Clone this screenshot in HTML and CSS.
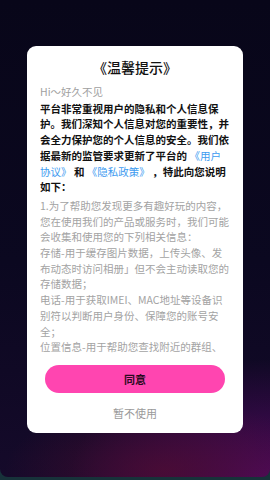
FILE: index.html
```html
<!DOCTYPE html>
<html lang="zh-CN">
<head>
    <meta charset="UTF-8">
    <meta name="viewport" content="width=device-width, initial-scale=1.0">
    <title>温馨提示</title>
    <link rel="stylesheet" href="styles.css">
</head>
<body>

<div class="screen">
    <div class="dialog">
        <h2 class="dialog-title">《温馨提示》</h2>

        <div class="dialog-body">
            <p class="hello">Hi～好久不见</p>
            <p class="lead">
                平台非常重视用户的隐私和个人信息保<br>
                护。我们深知个人信息对您的重要性，并<br>
                会全力保护您的个人信息的安全。我们依<br>
                据最新的监管要求更新了平台的 <a href="#">《用户<br>
                协议》</a> 和 <a href="#">《隐私政策》</a> ，特此向您说明<br>
                如下：
            </p>
            <p class="detail">
                1.为了帮助您发现更多有趣好玩的内容，<br>
                您在使用我们的产品或服务时，我们可能<br>
                会收集和使用您的下列相关信息：<br>
                存储-用于缓存图片数据，上传头像、发<br>
                布动态时访问相册」但不会主动读取您的<br>
                存储数据；<br>
                电话-用于获取IMEI、MAC地址等设备识<br>
                别符以判断用户身份、保障您的账号安<br>
                全；<br>
                位置信息-用于帮助您查找附近的群组、
            </p>
        </div>

        <button class="btn-agree">同意</button>
        <div class="btn-later">暂不使用</div>
    </div>
</div>

</body>
</html>
```

FILE: styles.css
```css
html, body {
    margin: 0;
    padding: 0;
}
body {
    width: 270px;
    height: 480px;
    overflow: hidden;
    background-color: #17323a;
    font-family: "Noto Sans CJK SC", "Noto Sans", sans-serif;
}
.screen {
    height: 477px;
    padding-top: 46px;
    box-sizing: border-box;
    border-radius: 0 0 8px 8px;
    background-color: #0a0820;
    background-image:
        radial-gradient(ellipse 160px 70px at 165px 470px, rgba(80, 12, 50, 0.75), rgba(80, 12, 50, 0) 100%),
        radial-gradient(ellipse 200px 120px at 270px 480px, rgba(85, 10, 100, 0.9), rgba(85, 10, 100, 0) 100%),
        linear-gradient(180deg, #080619 0%, #0b0820 55%, #150a2a 100%);
}
.dialog {
    width: 216px;
    height: 387px;
    margin: 0 auto;
    padding: 10px 13px 11px;
    box-sizing: border-box;
    background-color: #ffffff;
    border-radius: 9px;
    display: flex;
    flex-direction: column;
}
.dialog-title {
    margin: 0;
    font-size: 14px;
    line-height: 22px;
    font-weight: 500;
    color: #111;
    text-align: center;
}
.dialog-body {
    margin-top: 6px;
    height: 272px;
    overflow-y: auto;
    scrollbar-width: none;
    font-size: 10.5px;
    line-height: 15.7px;
    white-space: nowrap;
}
.dialog-body p {
    margin: 0;
}
.hello {
    color: #a0a0a0;
    margin-bottom: 1px !important;
}
.lead {
    color: #111;
    font-weight: 700;
}
.lead a {
    color: #3d9bf0;
    font-weight: 400;
    text-decoration: none;
}
.detail {
    margin-top: 3px !important;
    color: #a3a3a3;
}
.btn-agree {
    margin: 9px 5px 0;
    height: 28px;
    border: none;
    border-radius: 14px;
    background-color: #ff45b0;
    color: #2a0a20;
    font-family: inherit;
    font-size: 11px;
    font-weight: 700;
}
.btn-later {
    margin-top: 12px;
    text-align: center;
    font-size: 11px;
    line-height: 16px;
    color: #9a9a9a;
}
```
